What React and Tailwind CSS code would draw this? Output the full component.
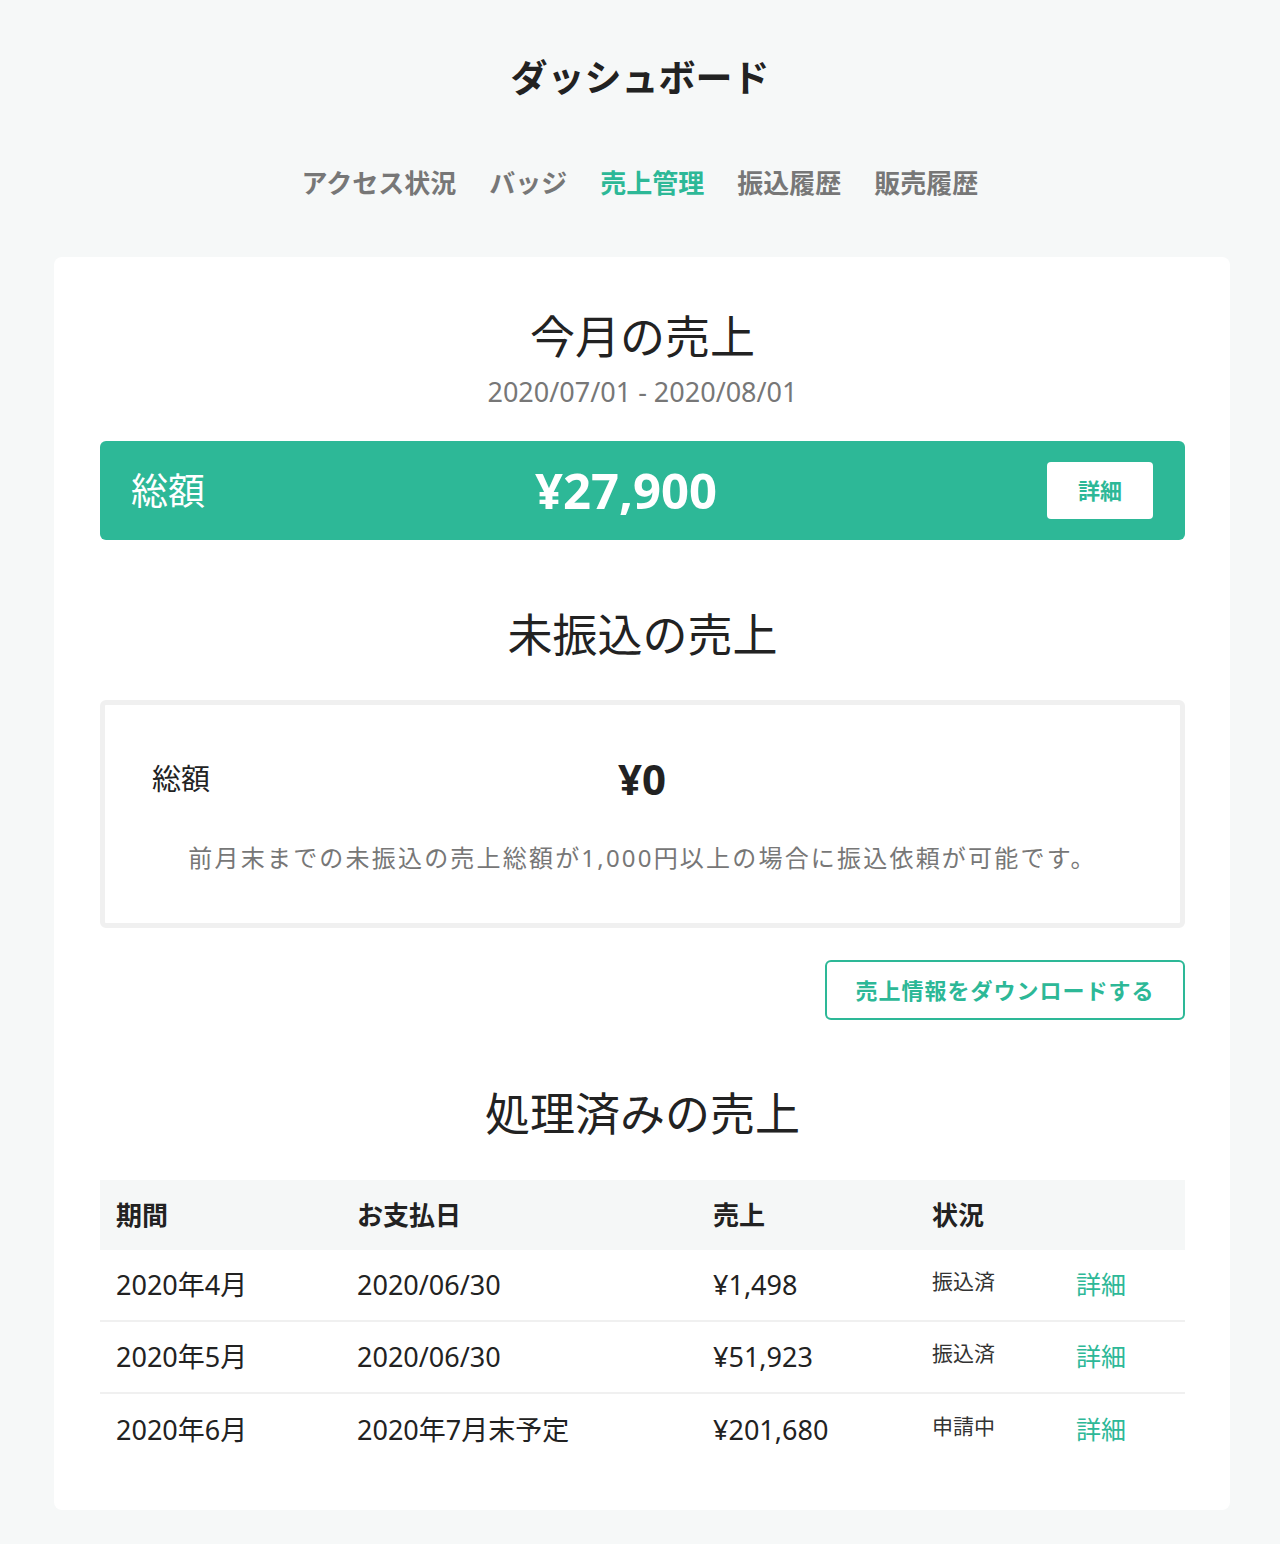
import React from "react";

const tabs = ["アクセス状況", "バッジ", "売上管理", "振込履歴", "販売履歴"];

const rows = [
  { term: "2020年4月", pay: "2020/06/30", amount: "¥1,498", status: "振込済" },
  { term: "2020年5月", pay: "2020/06/30", amount: "¥51,923", status: "振込済" },
  { term: "2020年6月", pay: "2020年7月末予定", amount: "¥201,680", status: "申請中" },
];

const SectionTitle = ({ children, className = "" }) => (
  <h2 className={`text-center text-[45px] leading-[56px] text-[#222] ${className}`}>
    {children}
  </h2>
);

const App = () => {
  return (
    <div
      className="min-h-[1544px] bg-[#f6f8f8] pb-[34px]"
      style={{ fontFamily: '"Noto Sans", "Noto Sans CJK JP", sans-serif' }}
    >
      <header className="pt-[56px] text-center">
        <h1 className="text-[37px] font-bold leading-[44px] text-[#222]">ダッシュボード</h1>
        <nav className="mt-[63px] flex justify-center gap-[33px] text-[26px] font-bold leading-[40px] text-[#777]">
          {tabs.map((t) => (
            <a key={t} className={t === "売上管理" ? "text-[#2db897]" : ""}>
              {t}
            </a>
          ))}
        </nav>
      </header>

      <main className="ml-[54px] mt-[54px] w-[1176px] rounded-lg bg-white pl-[46px] pr-[45px] pt-[52px] pb-[44px]">
        {/* 今月の売上 */}
        <SectionTitle>今月の売上</SectionTitle>
        <p className="mt-[11px] text-center text-[27px] leading-[32px] text-[#777]">
          2020/07/01 - 2020/08/01
        </p>
        <div className="mt-[33px] flex h-[99px] items-center justify-between rounded-md bg-[#2db897] pl-[31px] pr-[32px] text-white">
          <span className="text-[37px]">総額</span>
          <span className="text-[49px] font-bold">¥27,900</span>
          <button className="h-[57px] w-[106px] rounded bg-white text-[22px] font-bold text-[#2db897]">
            詳細
          </button>
        </div>

        {/* 未振込の売上 */}
        <SectionTitle className="mt-[67px]">未振込の売上</SectionTitle>
        <div className="mt-[37px] h-[228px] rounded-md border-[5px] border-[#f0f0f0] pt-[54px]">
          <div className="flex items-center pl-[47px] leading-[40px]">
            <span className="w-[466px] text-[29px] text-[#222]">総額</span>
            <span className="text-[42px] font-bold text-[#222]">¥0</span>
          </div>
          <p className="mt-[43px] text-center text-[24px] leading-[32px] tracking-[2.2px] text-[#777]">
            前月末までの未振込の売上総額が1,000円以上の場合に振込依頼が可能です。
          </p>
        </div>

        <div className="mt-[32px] flex justify-end">
          <button className="h-[60px] w-[360px] rounded-md border-2 border-[#2db897] text-[22px] font-bold tracking-[1px] text-[#2db897]">
            売上情報をダウンロードする
          </button>
        </div>

        {/* 処理済みの売上 */}
        <SectionTitle className="mt-[66px]">処理済みの売上</SectionTitle>
        <div className="mt-[38px]">
          <div className="grid h-[70px] grid-cols-[241px_356px_219px_144px_125px] items-center bg-[#f5f7f7] text-[26px] font-bold text-[#222]">
            <span className="pl-4">期間</span>
            <span className="pl-4">お支払日</span>
            <span className="pl-4">売上</span>
            <span className="pl-4">状況</span>
            <span />
          </div>
          {rows.map((r, i) => (
            <div
              key={r.term}
              className={`grid h-[72px] grid-cols-[241px_356px_219px_144px_125px] items-center text-[27px] text-[#222] ${
                i < rows.length - 1 ? "border-b-2 border-[#f0f0f0]" : ""
              }`}
            >
              <span className="pl-4">{r.term}</span>
              <span className="pl-4">{r.pay}</span>
              <span className="pl-4">{r.amount}</span>
              <span className="pl-4 pb-[6px] text-[21px] text-[#333]">{r.status}</span>
              <a className="pl-4 text-[25px] text-[#2db897]">詳細</a>
            </div>
          ))}
        </div>
      </main>
    </div>
  );
};

export default App;
